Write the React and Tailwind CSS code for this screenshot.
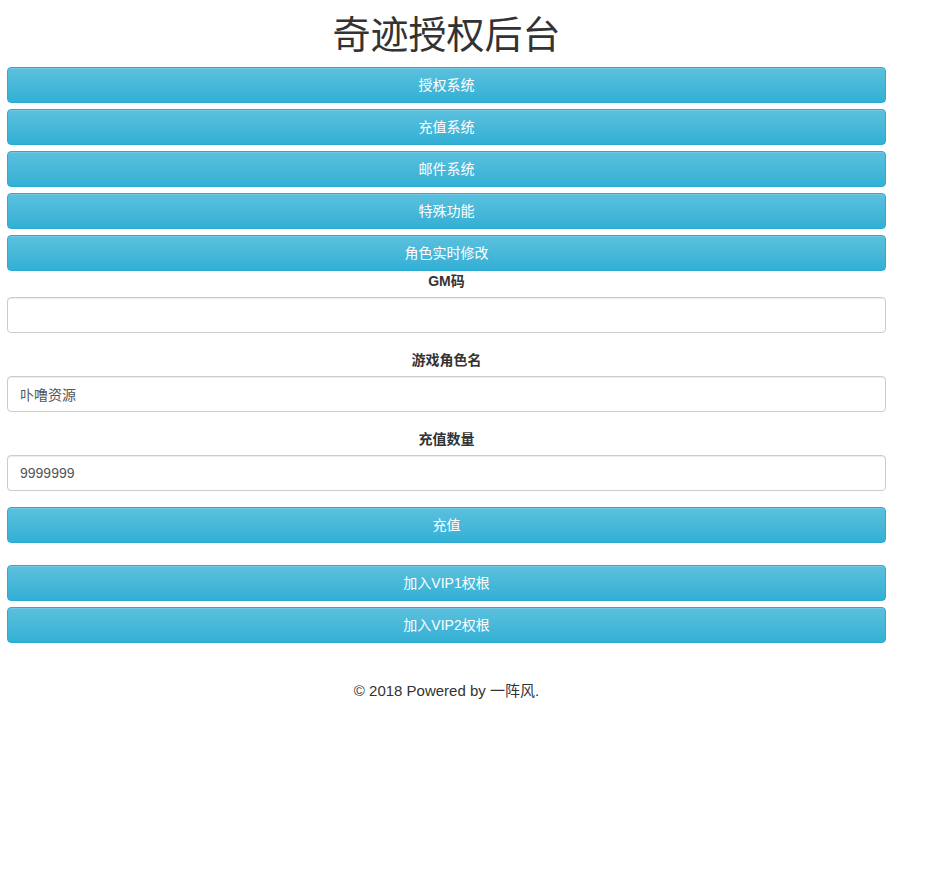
const font = { fontFamily: '"Liberation Sans", "Noto Sans CJK SC", sans-serif' };

const Btn = ({ children, className = "" }) => (
  <button
    className={`w-full h-[36px] rounded-[4px] border border-[#2aabd2] bg-gradient-to-b from-[#5bc0de] to-[#31b0d5] text-white text-[14px] leading-none shadow-[inset_0_1px_0_rgba(255,255,255,0.15)] ${className}`}
  >
    {children}
  </button>
);

const Field = ({ label, value, className = "" }) => (
  <div className={className}>
    <label className="block text-center font-bold text-[14px] leading-[20px] text-[#333]">{label}</label>
    <input
      defaultValue={value}
      className="block w-full h-[36px] mt-[6px] px-[12px] rounded-[4px] border border-[#ccc] text-[14px] text-[#555] outline-none shadow-[inset_0_1px_1px_rgba(0,0,0,0.075)]"
    />
  </div>
);

export default function App() {
  return (
    <div className="min-h-[872px] bg-white text-[#333]" style={font}>
      <div className="ml-[7px] w-[879px]">
        <h1 className="text-center text-[38px] leading-[44px] font-normal pt-[13px] pb-[10px]">奇迹授权后台</h1>
        <div className="flex flex-col gap-[6px]">
          <Btn>授权系统</Btn>
          <Btn>充值系统</Btn>
          <Btn>邮件系统</Btn>
          <Btn>特殊功能</Btn>
          <Btn>角色实时修改</Btn>
        </div>
        <Field label="GM码" value="" />
        <Field label="游戏角色名" value="卟噜资源" className="mt-[17px]" />
        <Field label="充值数量" value="9999999" className="mt-[17px]" />
        <Btn className="mt-[16px]">充值</Btn>
        <div className="flex flex-col gap-[6px] mt-[22px]">
          <Btn>加入VIP1权根</Btn>
          <Btn>加入VIP2权根</Btn>
        </div>
        <p className="text-center text-[15px] leading-[20px] text-[#333] mt-[38px]">© 2018 Powered by 一阵风.</p>
      </div>
    </div>
  );
}
